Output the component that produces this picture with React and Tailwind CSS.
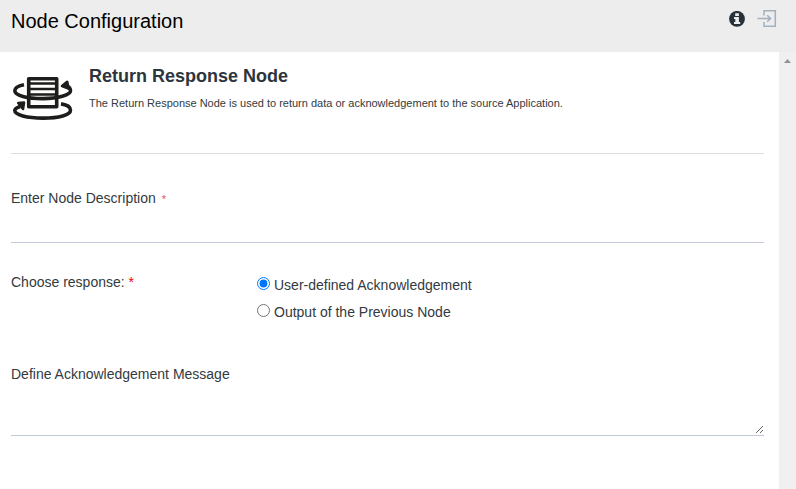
import { useState } from "react";

function InfoIcon() {
  return (
    <svg className="mr-3 mt-[2px]" width="16" height="16" viewBox="0 0 16 16">
      <circle cx="8" cy="7.8" r="7.9" fill="#263138" />
      <path d="M6.200 2.200H9.900V4.900H6.200ZM5 6H9.900V11.100H11.200V13.100H5V11.100H6.300V8H5Z" fill="#ededed" />
    </svg>
  );
}

function ExitIcon() {
  return (
    <svg width="20" height="20" viewBox="0 0 20 20" fill="none" stroke="#a3b1bf" strokeWidth="1.500">
      <path d="M7 6.500V1.700H18.300V17.300H7V13" />
      <path d="M0.500 9.500H13.500M10.200 6.200L13.600 9.500L10.200 12.800" />
    </svg>
  );
}

function ResponseIcon() {
  return (
    <svg width="62" height="46" viewBox="0 0 62 46" fill="none" stroke="#1d1d1b" strokeWidth="3.600">
      <rect x="16.700" y="3.700" width="28" height="28" strokeLinejoin="round" />
      <path d="M16 8.500H45M16 14H45M16 19.500H45" strokeWidth="2.300" />
      <path d="M12 9.800C6 11 2.800 13.300 2.800 15.800C2.800 20.500 15 23.600 31 23.600C46 23.600 58.500 20 58.500 15.800C58.500 13.600 57 11.800 54.500 10.700" />
      <path d="M8 31.500C4.500 32.700 2.800 34.200 2.800 35.600C2.800 40 15 43.100 31 43.100C47 43.100 58.500 39.900 58.500 35.300C58.500 32.300 55 29.800 49 28.900" />
      <path d="M50 11L55.200 6.800L56.500 13.600Z" fill="#1d1d1b" strokeWidth="2.600" strokeLinejoin="round" />
      <path d="M6.300 28L12 27.600L11 34Z" fill="#1d1d1b" strokeWidth="2.600" strokeLinejoin="round" />
    </svg>
  );
}

export default function App() {
  const [choice, setChoice] = useState("user");
  return (
    <div className="flex h-[489px] w-[796px] flex-col overflow-hidden bg-white font-['Liberation_Sans',Arial,sans-serif] text-[14px] text-[#333a40]">
      <header className="flex h-[52px] shrink-0 items-start justify-between bg-[#ededed] pl-[11px] pr-[19px]">
        <h1 className="pt-[6px] text-[20px] leading-[30px] text-black">Node Configuration</h1>
        <div className="flex pt-[9px]">
          <InfoIcon />
          <ExitIcon />
        </div>
      </header>
      <div className="flex min-h-0 flex-1">
        <main className="w-[779px] pl-[11px] pr-[15px]">
          <section className="flex h-[102px] border-b border-[#dcdcdc] pt-[12px]">
            <div className="w-[78px] pl-px pt-[11px]">
              <ResponseIcon />
            </div>
            <div>
              <h2 className="text-[18px] font-bold leading-6 text-[#2d353c]">Return Response Node</h2>
              <p className="mt-[7px] text-[11px] leading-4">
                The Return Response Node is used to return data or acknowledgement to the source Application.
              </p>
            </div>
          </section>
          <label className="block pt-[34px] leading-5">
            Enter Node Description <span className="ml-[2px] text-[11px] text-[#e8505b]">*</span>
            <input className="block h-[34px] w-full border-b border-[#c2cad8] outline-none" />
          </label>
          <div className="flex h-[92px] pt-[29px]">
            <div className="w-[246px] leading-5">
              Choose response: <span className="text-[#ff0000]">*</span>
            </div>
            <div className="pt-[3px]">
              <label className="flex h-[27px] items-start leading-5">
                <input type="radio" name="response" className="mr-1 mt-[2px] size-[13px]" checked={choice === "user"} onChange={() => setChoice("user")} />
                User-defined Acknowledgement
              </label>
              <label className="flex h-[27px] items-start leading-5">
                <input type="radio" name="response" className="mr-1 mt-[2px] size-[13px]" checked={choice === "output"} onChange={() => setChoice("output")} />
                Output of the Previous Node
              </label>
            </div>
          </div>
          <label className="block pt-[29px] leading-5">
            Define Acknowledgement Message
            <span className="block border-b border-[#c2cad8] pb-px">
              <textarea className="block h-[50px] w-full resize outline-none" />
            </span>
          </label>
        </main>
        <aside className="flex w-[17px] justify-center bg-[#f0f0f0] pt-[7px]">
          <svg width="7" height="4" viewBox="0 0 7 4" fill="#929292"><path d="M3.500 0L7 4H0Z" /></svg>
        </aside>
      </div>
    </div>
  );
}
